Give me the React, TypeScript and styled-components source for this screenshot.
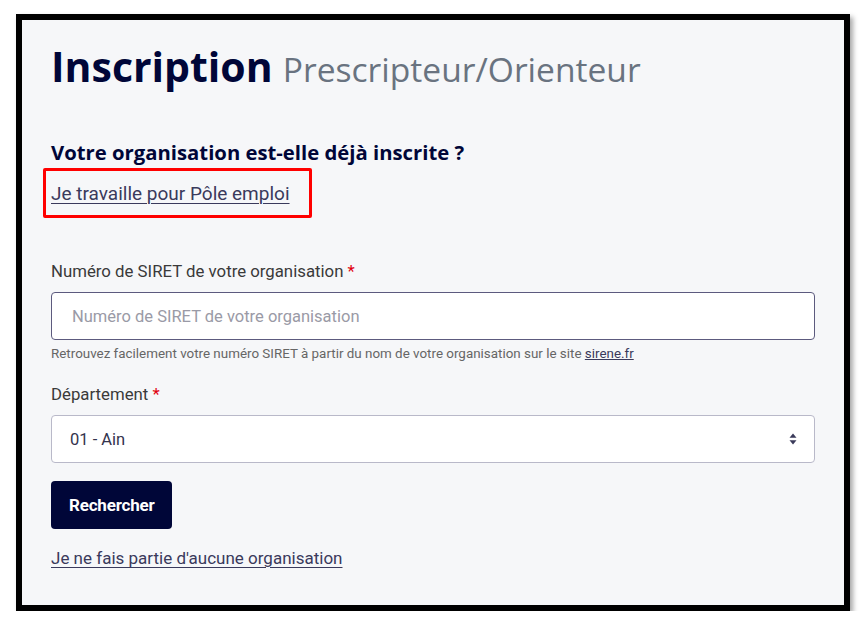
import React from "react";
import styled, { createGlobalStyle } from "styled-components";

const Global = createGlobalStyle`
  html, body { margin: 0; padding: 0; background: #ffffff; }
  body { font-family: Roboto, "Liberation Sans", sans-serif; }
  * { box-sizing: border-box; }
`;

const Frame = styled.div`
  margin: 14px 0 0 16px;
  width: 834px;
  height: 597px;
  border: 6px solid #000;
  background: #f6f7f9;
  box-shadow: 3px 3px 5px rgba(0, 0, 0, 0.35);
  padding: 22px 29px 0 29px;
  display: flex;
  flex-direction: column;
`;

const Title = styled.h1`
  margin: 0;
  font-family: "Open Sans", "Noto Sans", sans-serif;
  font-variant-ligatures: none;
  font-weight: 700;
  font-size: 41px;
  line-height: 48px;
  color: #000638;
  display: flex;
  align-items: baseline;
  gap: 10px;
`;

const Subtitle = styled.span`
  font-weight: 500;
  font-size: 33.6px;
  color: #697380;
`;

const Question = styled.h2`
  margin: 45px 0 0 0;
  font-family: "Open Sans", "Noto Sans", sans-serif;
  font-weight: 700;
  font-size: 20.3px;
  line-height: 28px;
  color: #000638;
`;

const Highlight = styled.div`
  align-self: flex-start;
  margin: 2px 0 0 -8px;
  border: 3px solid #ff0000;
  border-radius: 2px;
  padding: 11px 19px 9px 5px;
`;

const Link = styled.a<{ $size: number }>`
  font-size: ${(p) => p.$size}px;
  line-height: 24px;
  color: #3a3a5c;
  text-decoration: underline;
  text-underline-offset: 3px;
  text-decoration-thickness: 1px;
  cursor: pointer;
`;

const Field = styled.div<{ $top: number }>`
  margin-top: ${(p) => p.$top}px;
  display: flex;
  flex-direction: column;
`;

const Label = styled.label`
  font-size: 16.8px;
  line-height: 24px;
  color: #3a3a3a;
  margin-bottom: 9px;
`;

const Required = styled.span`
  color: #e1000f;
`;

const Input = styled.input`
  height: 48px;
  width: 100%;
  border: 1px solid #5c5a7e;
  border-radius: 4px;
  background: #fff;
  padding: 0 18px 0 20px;
  font-family: Roboto, "Liberation Sans", sans-serif;
  font-size: 16.5px;
  color: #333;
  outline: none;
  &::placeholder { color: #9a9aa6; }
`;

const Help = styled.div`
  margin-top: 5px;
  font-size: 13.4px;
  line-height: 17px;
  color: #666;
  a { color: #3a3a5c; text-decoration: underline; }
`;

const SelectBox = styled.div`
  height: 48px;
  width: 100%;
  border: 1px solid #b9b9c9;
  border-radius: 4px;
  background: #fff;
  padding: 0 17px 0 18px;
  display: flex;
  align-items: center;
  justify-content: space-between;
  font-size: 16.5px;
  color: #33334d;
`;

const Button = styled.button`
  align-self: flex-start;
  margin-top: 18px;
  height: 48px;
  padding: 0 18px;
  border: none;
  border-radius: 4px;
  background: #000638;
  color: #fff;
  font-family: Roboto, "Liberation Sans", sans-serif;
  font-weight: 700;
  font-size: 17px;
  letter-spacing: -0.2px;
`;

const Bottom = styled.div`
  margin-top: 17px;
`;

const SortIcon = () => (
  <svg width="8" height="12" viewBox="0 0 8 12">
    <path d="M4 0.5 L7.5 4.8 H0.5 Z" fill="#3a3a5a" />
    <path d="M4 11.5 L7.5 7.2 H0.5 Z" fill="#3a3a5a" />
  </svg>
);

export default function App() {
  return (
    <>
      <Global />
      <Frame>
        <Title>
          Inscription <Subtitle>Prescripteur/Orienteur</Subtitle>
        </Title>
        <Question>Votre organisation est-elle déjà inscrite ?</Question>
        <Highlight>
          <Link $size={19}>Je travaille pour Pôle emploi</Link>
        </Highlight>
        <Field $top={41}>
          <Label>
            Numéro de SIRET de votre organisation <Required>*</Required>
          </Label>
          <Input placeholder="Numéro de SIRET de votre organisation" />
          <Help>
            Retrouvez facilement votre numéro SIRET à partir du nom de votre organisation sur le site <a>sirene.fr</a>
          </Help>
        </Field>
        <Field $top={20}>
          <Label>
            Département <Required>*</Required>
          </Label>
          <SelectBox>
            <span>01 - Ain</span>
            <SortIcon />
          </SelectBox>
        </Field>
        <Button>Rechercher</Button>
        <Bottom>
          <Link $size={17}>Je ne fais partie d'aucune organisation</Link>
        </Bottom>
      </Frame>
    </>
  );
}
